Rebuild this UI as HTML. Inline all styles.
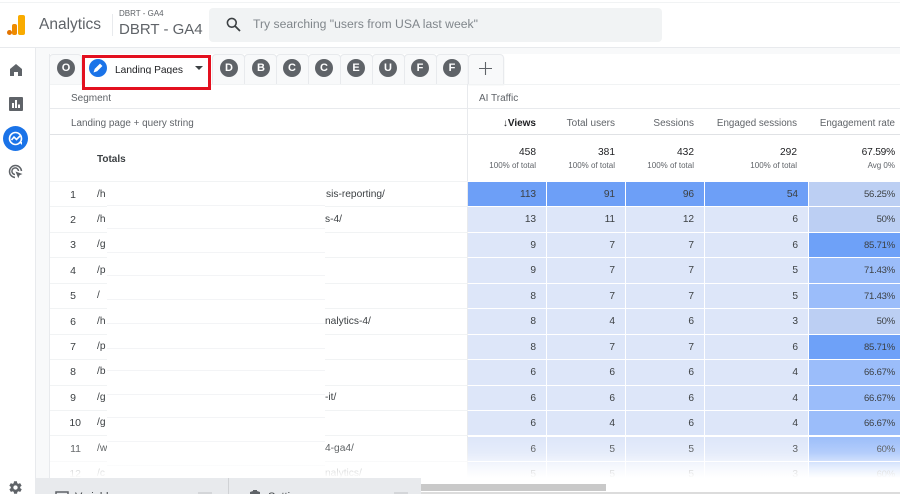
<!DOCTYPE html>
<html><head><meta charset="utf-8"><style>
html,body{margin:0;padding:0;background:#fff}
#p{position:relative;width:900px;height:494px;overflow:hidden;background:#fff;font-family:"Liberation Sans",sans-serif;color:#3c4043;filter:blur(.35px)}
#p div,#p span.a{position:absolute;box-sizing:border-box}
.t{white-space:nowrap;line-height:14px}
.tab{top:54px;height:30px;width:33px;background:#f8f9fa;border:1px solid #e8eaed;border-bottom:0;border-radius:4px 4px 0 0}
.c{top:59px;width:18px;height:18px;border-radius:50%;background:#5f6368;color:#fff;font:bold 11px/18px "Liberation Sans",sans-serif;text-align:center}
.r{left:468px;width:432px;height:24px}
.r b{position:absolute;top:0;height:100%;font:10.2px/26px "Liberation Sans",sans-serif;letter-spacing:-.1px;color:#3c4043;text-align:right;padding-right:10px;box-sizing:border-box}
.r b:nth-child(1){left:0;width:78px;padding-right:10px}
.r b:nth-child(2){left:79px;width:78px}
.r b:nth-child(3){left:158px;width:78px}
.r b:nth-child(4){left:237px;width:103px}
.r b:nth-child(5){left:341px;width:91px;padding-right:5px;font-size:9.5px;letter-spacing:-.2px}
.l{background:#dde6f9}.d{background:#6d9ff7}.m{background:#bccff3}.h{background:#6ea1f8}.s{background:#9bbdfa}
.n{left:50px;width:24px;font-size:10.5px;line-height:14px;text-align:right;color:#3c4043}
.u{left:97px;font-size:10.2px;line-height:14px;color:#3c4043;white-space:nowrap}
.v{left:312px;font-size:10.2px;line-height:14px;color:#3c4043;white-space:nowrap}
.ln{left:50px;width:418px;height:1px;background:#f1f3f4}
.wl{left:107px;width:218px;height:1px;background:#f3f4f6}
.hd{top:117px;font-size:10px;line-height:14px;color:#5f6368;text-align:right;white-space:nowrap}
.tv{top:146px;font-size:10.2px;line-height:13px;color:#202124;text-align:right}
.ts{top:160px;font-size:8px;line-height:12px;color:#5f6368;text-align:right;white-space:nowrap}
</style></head><body><div id="p">

<!-- top bar -->
<div style="left:0;top:2px;width:900px;height:1px;background:#f1f3f4"></div>
<div style="left:0;top:47px;width:900px;height:1px;background:#e8eaed"></div>
<div style="left:7px;top:30px;width:5px;height:5px;border-radius:3px;background:#e37400"></div>
<div style="left:12px;top:24px;width:5px;height:11px;border-radius:2px;background:#ee8b00"></div>
<div style="left:18px;top:15px;width:7px;height:20px;border-radius:2px;background:#f9ab00"></div>
<div class="t" style="left:39px;top:16px;font-size:15.5px;line-height:18px;color:#5f6368">Analytics</div>
<div style="left:112px;top:14px;width:1px;height:22px;background:#e8eaed"></div>
<div class="t" style="left:119px;top:9px;font-size:8px;line-height:10px;color:#5f6368">DBRT - GA4</div>
<div class="t" style="left:119px;top:21px;font-size:15px;line-height:18px;color:#5f6368">DBRT - GA4</div>
<div style="left:209px;top:8px;width:453px;height:34px;background:#f1f3f4;border-radius:4px"></div>
<svg style="position:absolute;left:225px;top:16px" width="17" height="17" viewBox="0 0 17 17"><circle cx="6.800" cy="6.800" r="4.400" fill="none" stroke="#3c4043" stroke-width="1.600"/><path d="M10 10l5 5" stroke="#3c4043" stroke-width="1.800"/></svg>
<div class="t" style="left:253px;top:16px;font-size:12.2px;line-height:16px;color:#80868b">Try searching "users from USA last week"</div>

<!-- sidebar -->
<div style="left:0;top:48px;width:36px;height:446px;background:#fff;border-right:1px solid #e8eaed"></div>
<div style="left:36px;top:48px;width:14px;height:446px;background:#f8f9fa;border-right:1px solid #e8eaed"></div>
<div style="left:36px;top:48px;width:864px;height:6px;background:#f8f9fa"></div>
<svg style="position:absolute;left:9px;top:63px" width="14" height="14" viewBox="0 0 14 14"><path d="M7 1L1 6v7h4V9h4v4h4V6z" fill="#5f6368"/></svg>
<svg style="position:absolute;left:9px;top:97px" width="14" height="14" viewBox="0 0 14 14"><rect width="14" height="14" rx="1" fill="#5f6368"/><path d="M3 6h2v5H3zM6 3h2v8H6zM9 7.500h2V11H9z" fill="#fff"/></svg>
<div style="left:3px;top:126px;width:25px;height:25px;border-radius:50%;background:#1a73e8"></div>
<svg style="position:absolute;left:8px;top:131px" width="15" height="15" viewBox="0 0 15 15"><circle cx="7.500" cy="7.500" r="6" fill="none" stroke="#fff" stroke-width="1.600"/><path d="M3.500 9l2.500-3 2.500 2.500L12 5" fill="none" stroke="#fff" stroke-width="1.600"/><path d="M11 11l3 3v-3z" fill="#fff"/></svg>
<svg style="position:absolute;left:8px;top:164px" width="16" height="16" viewBox="0 0 16 16"><path d="M7 13.500A6 6 0 1 1 13.500 7" fill="none" stroke="#5f6368" stroke-width="1.500"/><path d="M7 10.500A3.300 3.300 0 1 1 10.500 7" fill="none" stroke="#5f6368" stroke-width="1.500"/><path d="M7.500 7.500l7 2.500-3 1.200-1.200 3z" fill="#5f6368"/></svg>
<svg style="position:absolute;left:8px;top:480px" width="15" height="15" viewBox="0 0 24 24"><path fill="#5f6368" d="M19.400 13c.1-.3.100-.7.100-1s0-.7-.1-1l2.100-1.600c.2-.2.200-.4.100-.6l-2-3.500c-.1-.2-.4-.3-.6-.2l-2.500 1c-.5-.4-1.100-.7-1.700-1l-.4-2.600c0-.3-.2-.5-.4-.5h-4c-.3 0-.5.200-.5.400l-.4 2.700c-.6.200-1.100.6-1.700 1l-2.500-1c-.2-.1-.5 0-.6.200l-2 3.500c-.1.200-.1.500.1.600L4.600 11c0 .3-.1.700-.1 1s0 .7.100 1l-2.100 1.600c-.2.200-.2.400-.1.600l2 3.500c.1.200.4.300.6.200l2.500-1c.5.400 1.100.7 1.700 1l.4 2.600c0 .3.200.5.500.5h4c.3 0 .5-.2.500-.4l.4-2.700c.6-.2 1.200-.6 1.700-1l2.500 1c.2.100.5 0 .6-.2l2-3.500c.1-.2.100-.5-.1-.6zM12 15.500a3.500 3.500 0 1 1 0-7 3.500 3.500 0 0 1 0 7z"/></svg>

<!-- tabs -->
<div class="tab" style="left:49px"></div>
<div class="c" style="left:57px">O</div>
<div class="tab" style="left:212px"></div><div class="c" style="left:220px">D</div>
<div class="tab" style="left:244px"></div><div class="c" style="left:252px">B</div>
<div class="tab" style="left:276px"></div><div class="c" style="left:283px">C</div>
<div class="tab" style="left:308px"></div><div class="c" style="left:315px">C</div>
<div class="tab" style="left:340px"></div><div class="c" style="left:347px">E</div>
<div class="tab" style="left:372px"></div><div class="c" style="left:379px">U</div>
<div class="tab" style="left:404px"></div><div class="c" style="left:411px">F</div>
<div class="tab" style="left:436px"></div><div class="c" style="left:443px">F</div>
<div class="tab" style="left:468px;width:36px;box-shadow:0 1px 1px #dadce0"></div>
<svg style="position:absolute;left:479px;top:62px" width="13" height="13" viewBox="0 0 13 13"><path d="M6.500 0v13M0 6.500h13" stroke="#5f6368" stroke-width="1.100"/></svg>

<!-- table chrome -->
<div style="left:50px;top:84px;width:850px;height:1px;background:#f1f3f4"></div>
<div style="left:50px;top:108px;width:850px;height:1px;background:#e8eaed"></div>
<div style="left:50px;top:134px;width:850px;height:1px;background:#e0e2e5"></div>
<div style="left:467px;top:84px;width:1px;height:394px;background:#e8eaed"></div>
<div class="t" style="left:71px;top:92px;font-size:10px;color:#5f6368">Segment</div>
<div class="t" style="left:479px;top:92px;font-size:10px;color:#5f6368">AI Traffic</div>
<div class="t" style="left:71px;top:117px;font-size:9.9px;color:#5f6368">Landing page + query string</div>
<div class="hd" style="left:468px;width:68px;color:#202124;font-weight:bold">&#8595;Views</div>
<div class="hd" style="left:547px;width:68px">Total users</div>
<div class="hd" style="left:626px;width:68px">Sessions</div>
<div class="hd" style="left:705px;width:92px;font-size:9.8px">Engaged sessions</div>
<div class="hd" style="left:809px;width:86px;font-size:9.8px">Engagement rate</div>
<div class="t" style="left:97px;top:153px;font-size:10px;font-weight:bold;color:#3c4043">Totals</div>
<div class="tv" style="left:468px;width:68px">458</div><div class="ts" style="left:468px;width:68px">100% of total</div>
<div class="tv" style="left:547px;width:68px">381</div><div class="ts" style="left:547px;width:68px">100% of total</div>
<div class="tv" style="left:626px;width:68px">432</div><div class="ts" style="left:626px;width:68px">100% of total</div>
<div class="tv" style="left:705px;width:92px">292</div><div class="ts" style="left:705px;width:92px">100% of total</div>
<div class="tv" style="left:809px;width:86px;letter-spacing:-.2px">67.59%</div><div class="ts" style="left:809px;width:86px">Avg 0%</div>

<!-- row separators left -->
<div class="ln" style="top:181px"></div><div class="ln" style="top:206px"></div><div class="ln" style="top:232px"></div><div class="ln" style="top:257px"></div><div class="ln" style="top:283px"></div><div class="ln" style="top:308px"></div><div class="ln" style="top:334px"></div><div class="ln" style="top:359px"></div><div class="ln" style="top:385px"></div><div class="ln" style="top:410px"></div><div class="ln" style="top:435px"></div><div class="ln" style="top:461px"></div>

<!-- left text -->
<div class="n" style="top:188px;width:26px">1</div><div class="u" style="top:188px">/h</div><div class="v" style="top:188px;left:326px">sis-reporting/</div>
<div class="n" style="top:213px;width:26px">2</div><div class="u" style="top:213px">/h</div><div class="v" style="top:213px;left:325px">s-4/</div>
<div class="n" style="top:238px;width:26px">3</div><div class="u" style="top:238px">/g</div>
<div class="n" style="top:264px;width:26px">4</div><div class="u" style="top:264px">/p</div>
<div class="n" style="top:289px;width:26px">5</div><div class="u" style="top:289px">/</div>
<div class="n" style="top:315px;width:26px">6</div><div class="u" style="top:315px">/h</div><div class="v" style="top:315px;left:325px">nalytics-4/</div>
<div class="n" style="top:340px;width:26px">7</div><div class="u" style="top:340px">/p</div>
<div class="n" style="top:365px;width:26px">8</div><div class="u" style="top:365px">/b</div>
<div class="n" style="top:391px;width:26px">9</div><div class="u" style="top:391px">/g</div><div class="v" style="top:391px;left:325px">-it/</div>
<div class="n" style="top:416px;left:50px;width:31px">10</div><div class="u" style="top:416px">/g</div>
<div class="n" style="top:442px;left:50px;width:31px">11</div><div class="u" style="top:442px">/w</div><div class="v" style="top:442px;left:325px">4-ga4/</div>
<div class="n" style="top:467px;left:50px;width:31px">12</div><div class="u" style="top:467px">/c</div><div class="v" style="top:467px;left:325px">nalytics/</div>

<!-- redaction patch -->
<div style="left:107px;top:182px;width:218px;height:296px;background:#fff"></div>
<div class="wl" style="top:205px"></div><div class="wl" style="top:228px"></div><div class="wl" style="top:252px"></div><div class="wl" style="top:275px"></div><div class="wl" style="top:299px"></div><div class="wl" style="top:323px"></div><div class="wl" style="top:348px"></div><div class="wl" style="top:370px"></div><div class="wl" style="top:394px"></div><div class="wl" style="top:417px"></div><div class="wl" style="top:441px"></div><div class="wl" style="top:465px"></div>

<!-- data rows -->
<div class="r" style="top:182px"><b class="d">113</b><b class="d">91</b><b class="d">96</b><b class="d">54</b><b class="m">56.25%</b></div>
<div class="r" style="top:207px;height:25px"><b class="l">13</b><b class="l">11</b><b class="l">12</b><b class="l">6</b><b class="m">50%</b></div>
<div class="r" style="top:233px"><b class="l">9</b><b class="l">7</b><b class="l">7</b><b class="l">6</b><b class="h">85.71%</b></div>
<div class="r" style="top:258px;height:25px"><b class="l">9</b><b class="l">7</b><b class="l">7</b><b class="l">5</b><b class="s">71.43%</b></div>
<div class="r" style="top:284px"><b class="l">8</b><b class="l">7</b><b class="l">7</b><b class="l">5</b><b class="s">71.43%</b></div>
<div class="r" style="top:309px;height:25px"><b class="l">8</b><b class="l">4</b><b class="l">6</b><b class="l">3</b><b class="m">50%</b></div>
<div class="r" style="top:335px"><b class="l">8</b><b class="l">7</b><b class="l">7</b><b class="l">6</b><b class="h">85.71%</b></div>
<div class="r" style="top:360px;height:25px"><b class="l">6</b><b class="l">6</b><b class="l">6</b><b class="l">4</b><b class="s">66.67%</b></div>
<div class="r" style="top:386px"><b class="l">6</b><b class="l">6</b><b class="l">6</b><b class="l">4</b><b class="s">66.67%</b></div>
<div class="r" style="top:411px"><b class="l">6</b><b class="l">4</b><b class="l">6</b><b class="l">4</b><b class="s">66.67%</b></div>
<div class="r" style="top:437px"><b class="l">6</b><b class="l">5</b><b class="l">5</b><b class="l">3</b><b class="s">60%</b></div>
<div class="r" style="top:462px;height:18px"><b class="l">5</b><b class="l">5</b><b class="l">5</b><b class="l">3</b><b class="s">60%</b></div>

<!-- fade -->
<div style="left:50px;top:436px;width:850px;height:42px;background:linear-gradient(to bottom,rgba(255,255,255,0) 0%,rgba(255,255,255,.25) 40%,rgba(255,255,255,.75) 75%,#fff 100%)"></div>
<div style="left:50px;top:478px;width:850px;height:16px;background:#fff"></div>

<!-- active tab with red outline -->
<div style="left:82px;top:55px;width:129px;height:35px;background:#fff;border:3px solid #e3101f"></div>
<div style="left:89px;top:59px;width:18px;height:18px;border-radius:50%;background:#1a73e8"></div>
<svg style="position:absolute;left:92px;top:62px" width="12" height="12" viewBox="0 0 12 12"><path d="M2 10l1-3 5-5 2 2-5 5z" fill="#fff" stroke="#fff" stroke-width=".6"/></svg>
<div class="t" style="left:115px;top:64px;font-size:10.2px;color:#202124;height:10px;overflow:hidden;line-height:13px">Landing Pages</div>
<div style="left:195px;top:66px;width:0;height:0;border-left:4px solid transparent;border-right:4px solid transparent;border-top:4px solid #3c4043"></div>

<!-- bottom -->
<div style="left:36px;top:478px;width:385px;height:16px;background:#e8eaed"></div>
<div style="left:228px;top:478px;width:1px;height:16px;background:#d0d2d5"></div>
<svg style="position:absolute;left:55px;top:491px" width="14" height="3" viewBox="0 0 14 3"><path d="M1 3V1h12v2" fill="none" stroke="#5f6368" stroke-width="1.500"/></svg>
<div class="t" style="left:75px;top:490px;font-size:11px;color:#3c4043">Variables</div>
<div style="left:198px;top:492px;width:14px;height:2px;background:#d4d6d9"></div>
<svg style="position:absolute;left:248px;top:490px" width="14" height="4" viewBox="0 0 14 4"><path d="M5 0h4v1l3 1v2H2V2l3-1z" fill="#5f6368"/></svg>
<div class="t" style="left:268px;top:490px;font-size:11px;color:#3c4043">Settings</div>
<div style="left:394px;top:492px;width:14px;height:2px;background:#d4d6d9"></div>
<div style="left:421px;top:484px;width:185px;height:7px;background:#c9c9c9"></div>
<div style="left:421px;top:492px;width:479px;height:2px;background:#dcdcdc"></div>

</div></body></html>
